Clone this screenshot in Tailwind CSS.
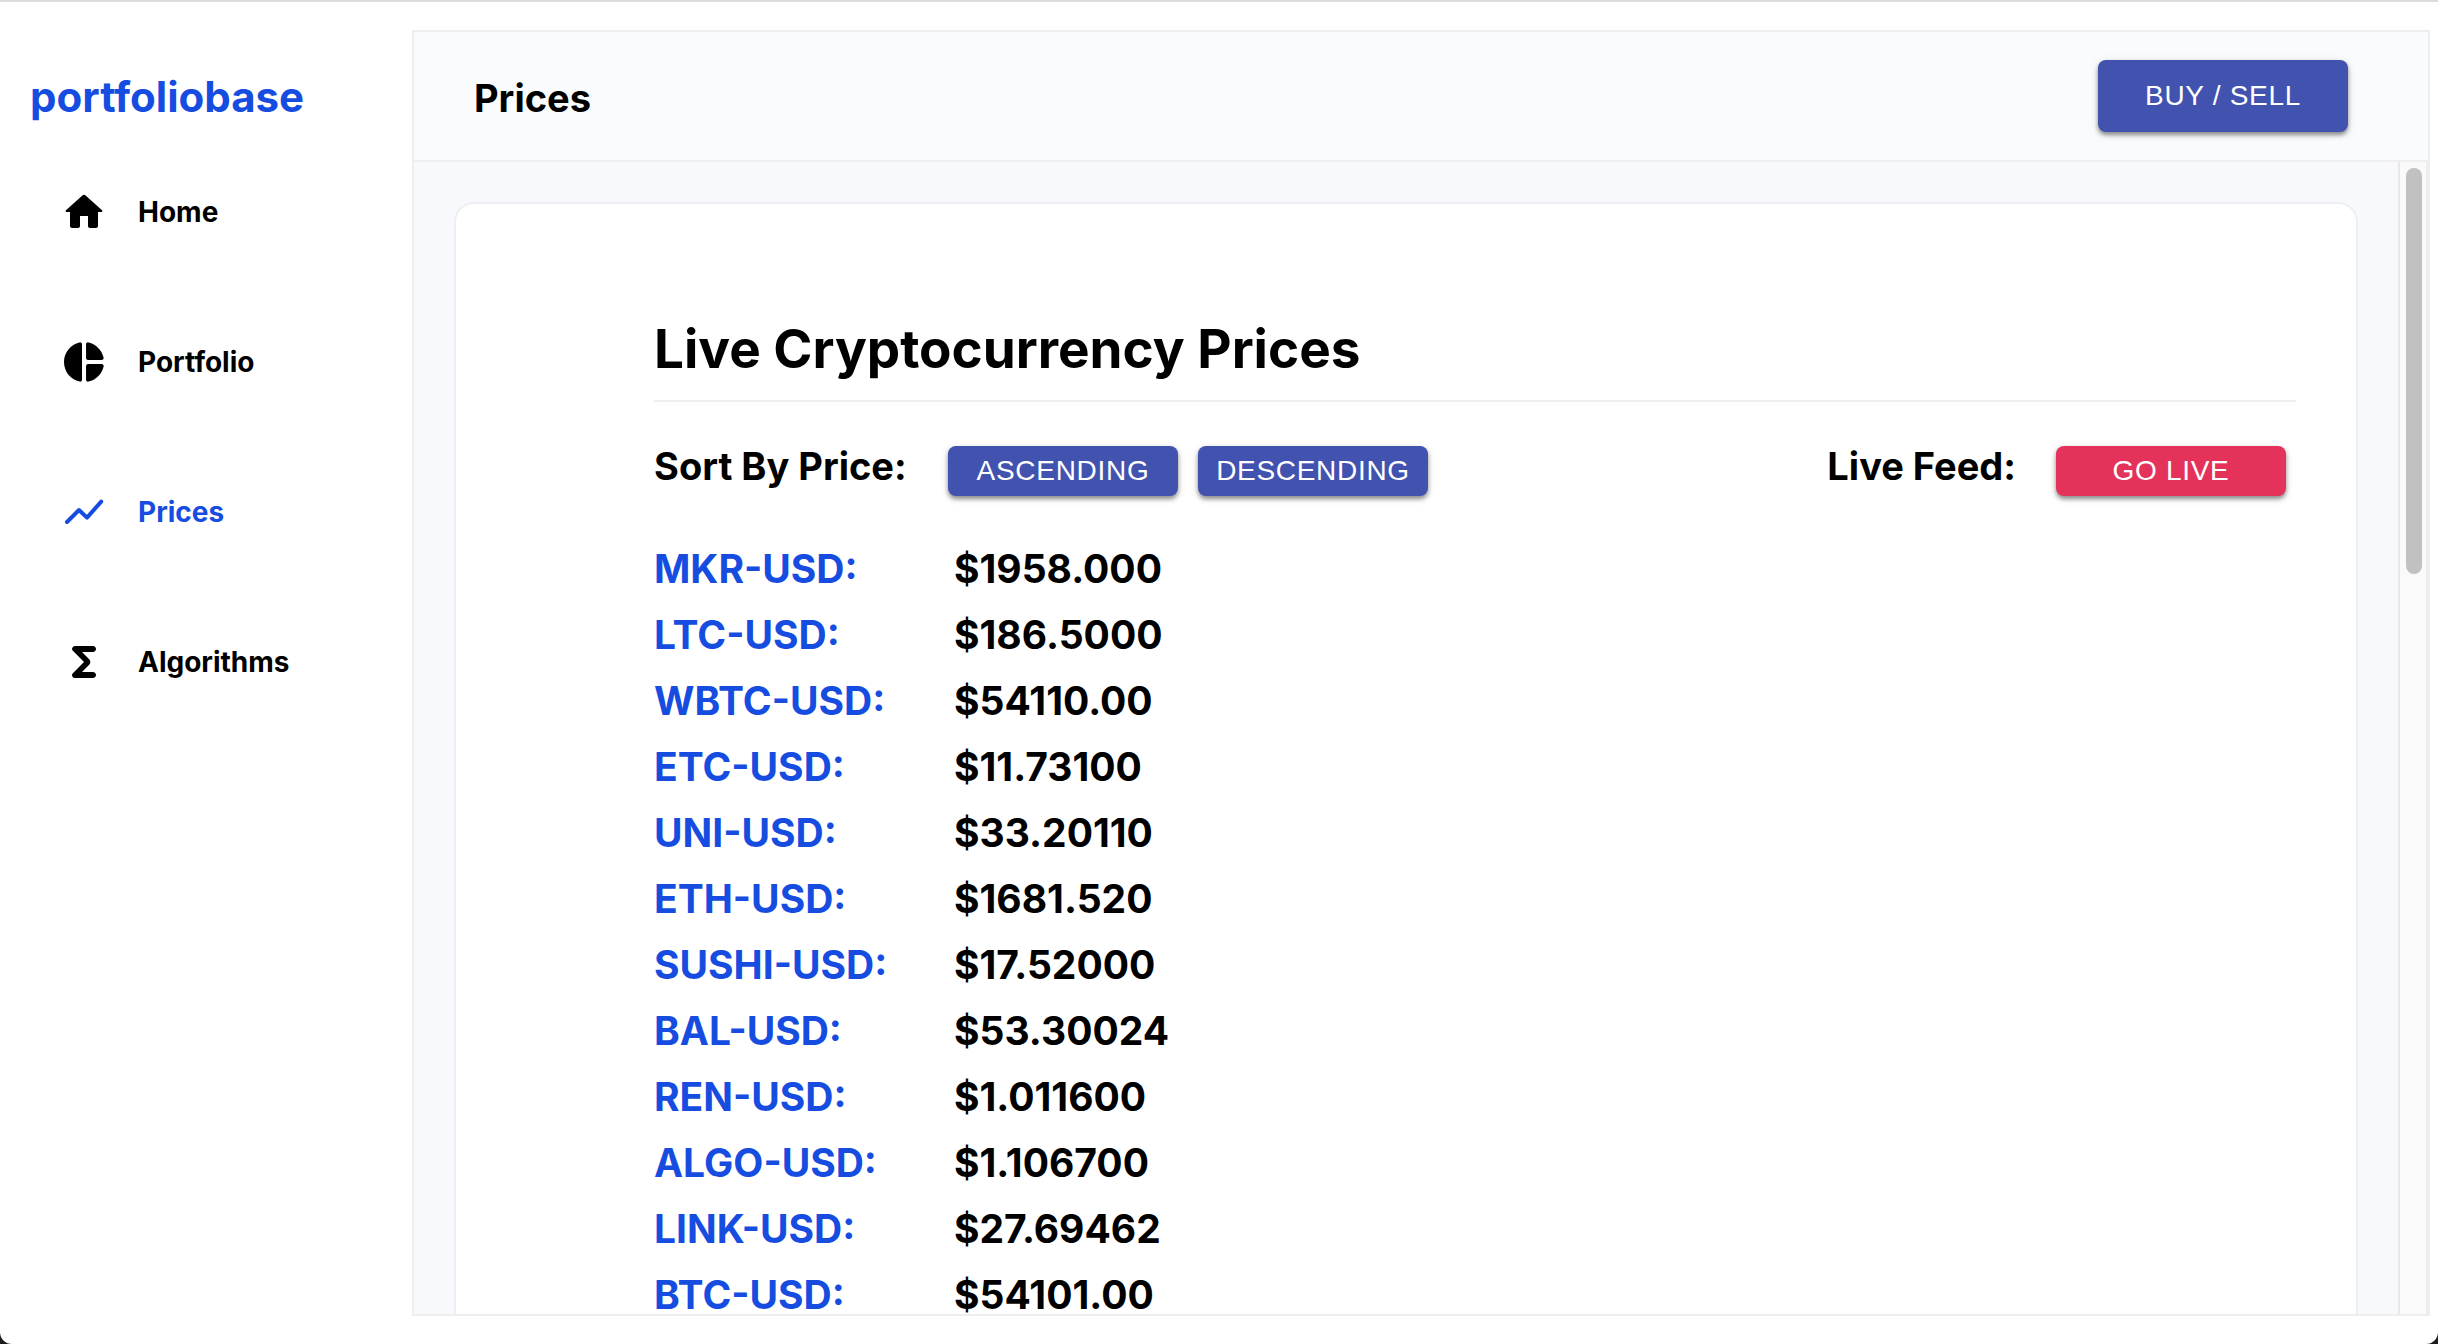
<!DOCTYPE html>
<html lang="en">
<head>
<meta charset="utf-8">
<title>portfoliobase</title>
<script src="https://cdn.jsdelivr.net/npm/@tailwindcss/browser@4"></script>
</head>
<body class="bg-[#1c1c1c] font-[Inter,sans-serif] text-black">
<div class="flex h-screen flex-col overflow-hidden rounded-b-xl border-t-2 border-[#dcdce0] bg-white">
  <div class="flex min-h-0 flex-1 pt-7 pr-2 pb-7">
    <aside class="w-[412px] shrink-0">
      <a href="#" class="block pt-10 pl-[30px] text-[42px] leading-[54px] font-bold text-[#164de0]">portfoliobase</a>
      <nav class="mt-16 flex flex-col gap-[102px] pl-[60px] text-[28px] leading-[48px] font-bold">
        <a href="#" class="flex items-center gap-[30px]">
          <svg class="size-12" viewBox="0 0 24 24" fill="currentColor" aria-hidden="true"><path d="M10 19v-5h4v5c0 .55.45 1 1 1h3c.55 0 1-.45 1-1v-7h1.7c.46 0 .68-.57.33-.87L12.67 3.6c-.38-.34-.96-.34-1.34 0l-8.36 7.53c-.34.3-.13.87.33.87H5v7c0 .55.45 1 1 1h3c.55 0 1-.45 1-1z"/></svg>
          Home
        </a>
        <a href="#" class="flex items-center gap-[30px]">
          <svg class="size-12" viewBox="0 0 24 24" fill="currentColor" aria-hidden="true"><path d="M11 3.18v17.64c0 .64-.59 1.12-1.21.98C5.32 20.8 2 16.79 2 12s3.32-8.8 7.79-9.8c.62-.14 1.21.34 1.21.98zm2.03 0v6.81c0 .55.45 1 1 1h6.79c.64 0 1.12-.59.98-1.22-.85-3.76-3.8-6.72-7.55-7.57-.63-.14-1.22.34-1.22.98zm0 10.83v6.81c0 .64.59 1.12 1.22.98 3.76-.85 6.71-3.82 7.56-7.58.14-.62-.35-1.22-.98-1.22h-6.79c-.56.01-1.01.46-1.01 1.01z"/></svg>
          Portfolio
        </a>
        <a href="#" class="flex items-center gap-[30px] text-[#164de0]" aria-current="page">
          <svg class="size-12" viewBox="0 0 24 24" fill="none" stroke="currentColor" stroke-width="2" stroke-linecap="round" stroke-linejoin="round" aria-hidden="true"><path d="M3.5 17l6-6 4 3.8 7.1-8"/></svg>
          Prices
        </a>
        <a href="#" class="flex items-center gap-[30px]">
          <svg class="size-12" viewBox="0 0 24 24" fill="currentColor" aria-hidden="true"><path d="M16.5 4H7.56C6.7 4 6 4.7 6 5.56c0 .28.12.55.32.74L12 12l-5.68 5.7c-.2.19-.32.46-.32.74C6 19.3 6.7 20 7.56 20h8.94c.83 0 1.5-.67 1.5-1.5s-.67-1.5-1.5-1.5H11l3.59-3.59c.78-.78.78-2.05 0-2.83L11 7h5.5c.83 0 1.5-.67 1.5-1.5S17.33 4 16.5 4z"/></svg>
          Algorithms
        </a>
      </nav>
    </aside>
    <main class="flex min-w-0 flex-1 flex-col border-2 border-[#eeeeee]">
      <header class="flex h-[130px] shrink-0 items-center justify-between border-b-2 border-[#eeeeee] bg-[#fafbfd] pr-20 pl-[60px]">
        <h1 class="pt-1 text-[38px] leading-[48px] font-bold">Prices</h1>
        <button class="h-[72px] w-[250px] rounded-lg bg-[#4252af] font-['Liberation_Sans',sans-serif] text-[28px] tracking-wide text-white shadow-[0_3px_4px_rgba(0,0,0,0.4),0_2px_10px_rgba(0,0,0,0.12)]">BUY / SELL</button>
      </header>
      <div class="flex min-h-0 flex-1 bg-[#f8f9fd]">
        <div class="min-w-0 flex-1 overflow-hidden px-10 pt-10">
          <section class="rounded-[20px] border-2 border-[#eeeff2] bg-white pt-[114px] pr-[60px] pb-[60px] pl-[198px]">
            <h2 class="h-[84px] border-b-2 border-[#eeeeee] text-[53px] leading-[62px] font-bold">Live Cryptocurrency Prices</h2>
            <div class="flex items-start pt-9 pr-[10px] font-['Liberation_Sans',sans-serif] text-[28px]">
              <span class="w-[294px] font-[Inter,sans-serif] text-[38px] leading-[56px] font-bold">Sort By Price:</span>
              <button class="mt-2 h-[50px] w-[230px] rounded-lg bg-[#4252af] tracking-wide text-white shadow-[0_3px_4px_rgba(0,0,0,0.4),0_2px_10px_rgba(0,0,0,0.12)]">ASCENDING</button>
              <button class="mt-2 ml-5 h-[50px] w-[230px] rounded-lg bg-[#4252af] tracking-wide text-white shadow-[0_3px_4px_rgba(0,0,0,0.4),0_2px_10px_rgba(0,0,0,0.12)]">DESCENDING</button>
              <span class="ml-auto font-[Inter,sans-serif] text-[38px] leading-[56px] font-bold">Live Feed:</span>
              <button class="mt-2 ml-10 h-[50px] w-[230px] rounded-lg bg-[#e4325a] tracking-wide text-white shadow-[0_3px_4px_rgba(0,0,0,0.4),0_2px_10px_rgba(0,0,0,0.12)]">GO LIVE</button>
            </div>
            <table class="mt-10 text-left text-[39px] leading-[66px] font-bold">
              <tbody>
                <tr><th scope="row" class="w-[300px] font-bold text-[#164de0]">MKR-USD:</th><td>$1958.000</td></tr>
                <tr><th scope="row" class="font-bold text-[#164de0]">LTC-USD:</th><td>$186.5000</td></tr>
                <tr><th scope="row" class="font-bold text-[#164de0]">WBTC-USD:</th><td>$54110.00</td></tr>
                <tr><th scope="row" class="font-bold text-[#164de0]">ETC-USD:</th><td>$11.73100</td></tr>
                <tr><th scope="row" class="font-bold text-[#164de0]">UNI-USD:</th><td>$33.20110</td></tr>
                <tr><th scope="row" class="font-bold text-[#164de0]">ETH-USD:</th><td>$1681.520</td></tr>
                <tr><th scope="row" class="font-bold text-[#164de0]">SUSHI-USD:</th><td>$17.52000</td></tr>
                <tr><th scope="row" class="font-bold text-[#164de0]">BAL-USD:</th><td>$53.30024</td></tr>
                <tr><th scope="row" class="font-bold text-[#164de0]">REN-USD:</th><td>$1.011600</td></tr>
                <tr><th scope="row" class="font-bold text-[#164de0]">ALGO-USD:</th><td>$1.106700</td></tr>
                <tr><th scope="row" class="font-bold text-[#164de0]">LINK-USD:</th><td>$27.69462</td></tr>
                <tr><th scope="row" class="font-bold text-[#164de0]">BTC-USD:</th><td>$54101.00</td></tr>
              </tbody>
            </table>
          </section>
        </div>
        <div class="w-[30px] shrink-0 border-r-2 border-l-2 border-r-[#ededed] border-l-[#e8e8e8] bg-[#fafafa] pt-[6px] pl-[6px]">
          <div class="h-[406px] w-4 rounded-full bg-[#c1c1c1]"></div>
        </div>
      </div>
    </main>
  </div>
</div>
</body>
</html>
